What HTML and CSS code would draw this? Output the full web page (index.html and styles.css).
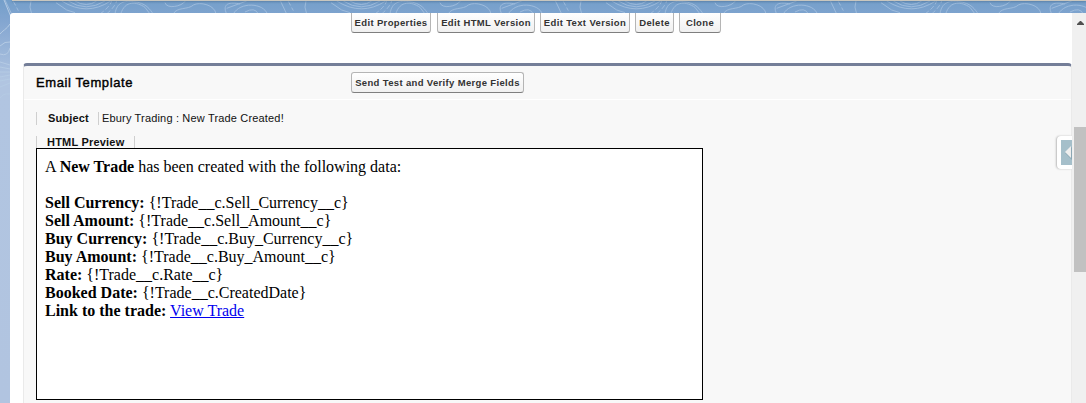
FILE: index.html
```
<!DOCTYPE html>
<html lang="en">
<head>
<meta charset="utf-8">
<title>Email Template</title>
<link rel="stylesheet" href="styles.css">
</head>
<body>
<svg class="backdrop" width="1086" height="403" viewBox="0 0 1086 403" aria-hidden="true">
  <defs>
    <pattern id="contours" width="275" height="160" patternUnits="userSpaceOnUse">
      <g transform="scale(.33333)" fill="none" stroke="#9dbbdc" stroke-width="3">
        <path d="M185 3Q260 50 332 3M205 3Q258 38 315 3M225 3Q260 24 290 3M168 8L200 30L225 38M345 42C350 5 375 2 400 5C440 8 450 30 460 42M362 42C375 0 410 5 435 22L450 42M495 8C500 28 545 20 556 3M520 42C530 20 565 30 580 15C600 4 645 15 648 42M680 42C665 10 690 5 720 12M700 42C720 5 790 8 802 42M735 36Q765 20 775 42M680 25L740 3M93 3Q86 20 95 42M15 0L35 42"/>
        <path stroke-dasharray="14 7" d="M300 42Q330 20 335 3M320 42Q345 20 350 3M40 4L55 32"/>
      </g>
    </pattern>
  </defs>
  <rect width="1086" height="13" fill="url(#contours)"/>
  <g fill="none" stroke="#b5cbe4">
    <path d="M4 0L11 17M0 34C2 31 7 29 10 24M0 46Q5 41 10 42M0 54Q8 57 10 48M0 62L10 65M0 67L10 69M0 72L10 72M0 77L10 75M0 81L10 79M0 87L10 83M0 98Q3 93 10 94"/>
  </g>
</svg>
<div class="top-rule"></div>
<div class="window">
  <main class="content">
    <div class="actions">
      <button class="btn b1">Edit Properties</button><button class="btn b2">Edit HTML Version</button><button class="btn b3">Edit Text Version</button><button class="btn b4">Delete</button><button class="btn b5">Clone</button>
    </div>
    <section class="panel">
      <header class="panel-head"><h2>Email Template</h2><button class="btn send">Send Test and Verify Merge Fields</button></header>
      <div class="field"><span class="label">Subject</span><span class="value">Ebury Trading : New Trade Created!</span></div>
      <div class="field preview-label"><span class="label">HTML Preview</span><span class="value"></span></div>
      <article class="preview">
        <div>A <b>New Trade</b> has been created with the following data:</div>
        <br>
        <div><b>Sell Currency:</b> {!Trade__c.Sell_Currency__c}</div>
        <div><b>Sell Amount:</b> {!Trade__c.Sell_Amount__c}</div>
        <div><b>Buy Currency:</b> {!Trade__c.Buy_Currency__c}</div>
        <div><b>Buy Amount:</b> {!Trade__c.Buy_Amount__c}</div>
        <div><b>Rate:</b> {!Trade__c.Rate__c}</div>
        <div><b>Booked Date:</b> {!Trade__c.CreatedDate}</div>
        <div><b>Link to the trade:</b> <a href="#">View Trade</a></div>
      </article>
    </section>
    <div class="side-tab"><svg width="11" height="25" viewBox="0 0 11 25"><path fill="#a5bfca" d="M0 0H11V25H0z"/><path fill="#71909e" opacity=".5" d="M11 7L4 13L11 20z"/><path fill="#eee" d="M10 6L4 12L10 18z"/></svg></div>
  </main>
  <aside class="scrollbar"><svg class="up" width="7" height="4" viewBox="0 0 7 4"><path fill="#505050" d="M0 4V3L3 0H4L7 3V4z"/></svg><div class="thumb"></div></aside>
</div>
</body>
</html>
```
FILE: styles.css
```
* { box-sizing: border-box; }
body {
  margin: 0;
  width: 1086px;
  height: 403px;
  overflow: hidden;
  display: flex;
  flex-direction: column;
  font-family: "Liberation Sans", Arial, sans-serif;
  color: #000;
  background: linear-gradient(#749fca 0, #82a5d0 20px, #b1c5e1 80px, #b1c4e0 100%);
}
.backdrop { position: absolute; z-index: -1; left: 0; top: 0; }
.top-rule { height: 1px; margin-left: 12px; background: #c9c7bf; box-shadow: 0 1px 2px #4f7399; }
.window { display: flex; height: 390px; margin: 12px 0 0 10px; background: #fff; border-radius: 3px 0 0 0; overflow: hidden; }
.content { position: relative; width: 1062px; padding-left: 13px; }
.actions { display: flex; height: 50px; padding-left: 328px; }
.btn {
  height: 21px;
  padding: 0;
  border: 1px solid #b5b5b5;
  border-bottom-color: #7f7f7f;
  border-radius: 3px;
  background: linear-gradient(#fff, #f0f0f0);
  font: bold 9.5px/17px "Liberation Sans", Arial, sans-serif;
  color: #333;
  white-space: nowrap;
}
.actions .btn { height: 20px; border-top: 0; border-radius: 0 0 3px 3px; }
.b1 { width: 80px; margin-right: 6px; }
.b2 { width: 98px; margin-right: 5px; }
.b3 { width: 90px; margin-right: 5px; }
.b4 { width: 39px; margin-right: 5px; }
.b5 { width: 42px; }
.b1, .b2, .b3, .b4, .b5 { letter-spacing: .35px; }
.panel {
  width: 1049px;
  height: 345px;
  border: 1px solid #eaeaea;
  border-top: 3px solid #747e98;
  border-radius: 4px 4px 0 0;
  background: #f8f8f8;
}
.panel-head { display: flex; height: 34px; padding: 6px 0 0 12px; border-bottom: 1px solid #fff; }
h2 { width: 315px; margin: 0; padding-top: 1px; font-size: 13px; font-weight: normal; line-height: 20px; letter-spacing: .6px; -webkit-text-stroke: .4px #000; }
.send { width: 173px; letter-spacing: .34px; }
.field { display: flex; height: 13px; margin: 12px 0 0 12px; font-size: 11px; line-height: 13px; white-space: nowrap; }
.label { width: 62px; padding-left: 11px; border-left: 1px solid #cfcfcf; font-weight: bold; letter-spacing: .15px; color: #111; }
.value { padding-left: 3px; border-left: 1px solid #cfcfcf; letter-spacing: .17px; color: #111; }
.preview-label { margin-top: 11px; height: 12px; }
.preview-label .label { width: 98px; padding-left: 10px; letter-spacing: .2px; }
.preview {
  width: 667px;
  height: 252px;
  margin-left: 12px;
  padding: 9px 8px 7px;
  border: 1px solid #000;
  background: #fff;
  font: 16px/18px "Liberation Serif", "Times New Roman", serif;
}
.preview a { color: #00e; }
.side-tab {
  position: absolute;
  right: 0;
  top: 123px;
  width: 15px;
  height: 33px;
  padding: 4px 0 4px 4px;
  background: #fff;
  border-radius: 4px 0 0 4px;
  box-shadow: -1px 0 2px #bbb;
}
.side-tab svg { display: block; }
.scrollbar { width: 14px; padding: 8px 0 0 2px; background: #f0f0f0; }
.up { display: block; margin-left: 3px; }
.thumb { height: 145px; margin-top: 102px; background: #c1c1c1; }
```
